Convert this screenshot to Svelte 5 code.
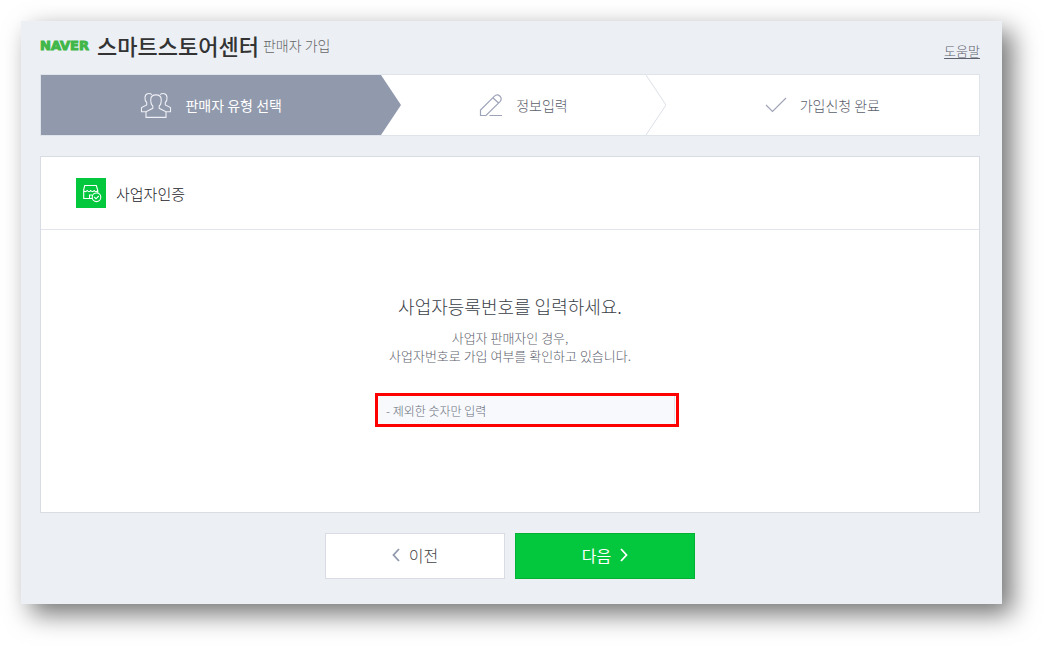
<script>
    let businessNumber = '';
</script>

<div class="page">
    <header class="header">
        <h1 class="title">
            <span class="naver">NAVER</span>
            <span class="service">스마트스토어센터</span>
            <span class="subtitle">판매자 가입</span>
        </h1>
        <a class="help" href="#help">도움말</a>
    </header>

    <ol class="steps">
        <li class="step step-type" aria-current="step">
            <svg width="32" height="26" viewBox="0 0 32 26" fill="none" stroke="#eef0f5" stroke-width="1.1">
                <path d="M6 20V25.400H26V20" />
                <path d="M12 2.700C9.500 0.500 5 1.200 5 5.500C4.800 7.800 5.500 9.500 6.700 10.500V13L1.500 15.500V19.800H6L12.800 16.300V14C11 12.500 10.600 10 10.800 7C11 3.500 14 2.900 16 2.900C18 2.900 21 3.500 21.200 7C21.400 10 21 12.500 19.200 14V16.300L26 19.800H30.500V15.500L25.300 13V10.500C26.500 9.500 27.200 7.800 27 5.500C27 1.200 22.500 0.500 20 2.700" />
            </svg>
            판매자 유형 선택
        </li>
        <li class="arrow" aria-hidden="true">
            <svg width="20" height="60" viewBox="0 0 20 60"><path d="M0 0L20 30L0 60Z" fill="#9199ac" /></svg>
        </li>
        <li class="step step-info">
            <svg width="24" height="24" viewBox="0 0 24 24" fill="none" stroke="#9da3b8" stroke-width="1.2">
                <path d="M1.500 22.500V17L15.200 3.400C17 1.700 19.400 1.700 21 3.200C22.600 4.700 22.600 6.900 21 8.600L7 22.500ZM13.800 4.800L19.600 10M10.500 22.500H23" />
            </svg>
            정보입력
        </li>
        <li class="arrow" aria-hidden="true">
            <svg width="20" height="60" viewBox="0 0 20 60"><path d="M0 0L20 30L0 60" fill="none" stroke="#dcdfe5" /></svg>
        </li>
        <li class="step step-done">
            <svg width="22" height="16" viewBox="0 0 22 16" fill="none" stroke="#a0a3b8" stroke-width="1.2">
                <path d="M1 8L7.500 14.500L21 1" />
            </svg>
            가입신청 완료
        </li>
    </ol>

    <main class="card">
        <h2 class="card-head">
            <span class="badge">
                <svg width="30" height="30" viewBox="0 0 30 30" fill="none" stroke="#fff" stroke-width="1.1">
                    <path d="M16 20.500H7.700V13M7.500 12.500L8.700 7.500H20.300L21.800 12.500V15M7.500 12C7.700 14.200 10.800 14.200 11.200 12C11.700 14.200 14.300 14.200 14.700 12C15.200 14.200 17.800 14.200 18.200 12C18.700 14.200 21.600 14.200 21.800 12M13.500 20.500V17H16" />
                    <circle cx="20.500" cy="19.300" r="4.300" />
                    <path d="M18.300 19L20 20.800L22.800 18" />
                </svg>
            </span>
            사업자인증
        </h2>
        <form class="card-body" on:submit|preventDefault>
            <label class="question" for="business-number">사업자등록번호를 입력하세요.</label>
            <p class="guide">
                사업자 판매자인 경우,<br>
                사업자번호로 가입 여부를 확인하고 있습니다.
            </p>
            <div class="field">
                <input id="business-number" type="text" placeholder="- 제외한 숫자만 입력" bind:value={businessNumber}>
            </div>
        </form>
    </main>

    <div class="buttons">
        <button class="button" type="button">
            <svg width="8" height="14" viewBox="0 0 8 14" fill="none" stroke="#9199ac" stroke-width="1.8"><path d="M7 1L1.500 7L7 13" /></svg>
            이전
        </button>
        <button class="button button-next" type="button">
            다음
            <svg width="8" height="14" viewBox="0 0 8 14" fill="none" stroke="#fff" stroke-width="1.8"><path d="M1 1L6.500 7L1 13" /></svg>
        </button>
    </div>
</div>

<style>
    :global(body) {
        background: #fff;
        font-family: "Noto Sans CJK KR", sans-serif;
        font-weight: 300;
        color: #5c616c;
    }

    .page {
        margin: 21px 42px 42px 21px;
        padding: 0 22px 25px 19px;
        background: #ecf0f5;
        box-shadow: 10px 10px 24px rgba(0, 0, 0, .55);
    }

    .header {
        display: flex;
        justify-content: space-between;
        align-items: center;
        height: 53px;
    }

    .title {
        display: flex;
        align-items: center;
        margin: 0;
        padding-bottom: 6px;
        line-height: 24px;
    }

    .naver {
        margin-right: 8px;
        padding-top: 3px;
        font-family: "DejaVu Sans", sans-serif;
        font-size: 13px;
        font-weight: 700;
        color: #41b649;
        -webkit-text-stroke: 1px #41b649;
    }

    .service {
        font-size: 22px;
        font-weight: 500;
        color: #333;
    }

    .subtitle {
        margin-left: 4px;
        font-size: 14px;
        font-weight: 300;
        color: #666;
    }

    .help {
        padding-top: 6px;
        font-size: 13px;
        color: #5c616c;
        text-underline-offset: 2px;
    }

    .steps {
        display: flex;
        margin: 0;
        padding: 0;
        list-style: none;
        background: #fff;
        border: 1px solid #dfe3ea;
        font-size: 14px;
    }

    .step {
        display: flex;
        justify-content: center;
        align-items: center;
        gap: 13px;
        height: 60px;
        flex: 313 1 0;
    }

    .step-type {
        flex-grow: 340;
        background: #9199ac;
        font-weight: 400;
        color: #fff;
    }

    .step-info {
        flex-grow: 244;
    }

    .arrow svg {
        display: block;
    }

    .card {
        margin-top: 20px;
        background: #fff;
        border: 1px solid #d9dce2;
    }

    .card-head {
        display: flex;
        align-items: center;
        gap: 10px;
        height: 72px;
        margin: 0;
        padding: 0 35px;
        border-bottom: 1px solid #e3e5ec;
        font-size: 15px;
        font-weight: 300;
        color: #222228;
    }

    .badge {
        width: 30px;
        height: 30px;
        background: #03c73c;
    }

    .card-body {
        display: flex;
        flex-direction: column;
        align-items: center;
        padding: 62px 20px 85px;
        text-align: center;
    }

    .question {
        font-size: 18px;
        line-height: 28px;
        color: #3a3e47;
    }

    .guide {
        margin: 9px 0 28px;
        font-size: 13px;
        line-height: 18px;
    }

    .field {
        padding-left: 34px;
    }

    input {
        display: block;
        box-sizing: border-box;
        width: 304px;
        height: 34px;
        padding: 0 8px;
        border: 3px solid #f00;
        border-radius: 0;
        background: #f7f9fd;
        box-shadow: inset -1px 0 #fff, inset -2px 0 #dde1e8;
        font: inherit;
        font-size: 12px;
        color: #333;
    }

    input::placeholder {
        color: #6b707c;
        opacity: 1;
    }

    .buttons {
        display: flex;
        justify-content: center;
        gap: 10px;
        margin-top: 20px;
    }

    .button {
        display: flex;
        justify-content: center;
        align-items: center;
        gap: 9px;
        width: 180px;
        height: 46px;
        padding: 0 6px 2px;
        border: 1px solid #d9dde3;
        background: #fff;
        font: inherit;
        font-size: 16px;
        color: #444;
    }

    .button-next {
        border-color: #04b137;
        background: #03c73c;
        font-weight: 400;
        color: #fff;
    }
</style>
